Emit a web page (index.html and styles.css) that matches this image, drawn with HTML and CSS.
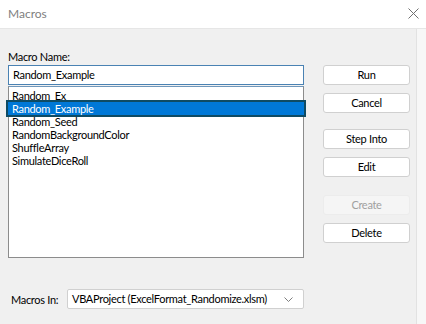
FILE: index.html
```html
<!DOCTYPE html>
<html>
<head>
<meta charset="utf-8">
<link rel="stylesheet" href="styles.css">
</head>
<body>
<div class="window">
  <div class="titlebar">
    <span class="title">Macros</span>
    <svg class="close" width="11" height="11" viewBox="0 0 11 11"><path d="M0.5 0.5 L10.5 10.5 M10.5 0.5 L0.5 10.5" stroke="#707070" stroke-width="1" fill="none"/></svg>
  </div>
  <div class="body">
    <div class="top">
      <div class="left">
        <div class="label">Macro Name:</div>
        <div class="input">Random_Example</div>
        <div class="list">
          <div class="item">Random_Ex</div>
          <div class="item selected">Random_Example</div>
          <div class="item">Random_Seed</div>
          <div class="item">RandomBackgroundColor</div>
          <div class="item">ShuffleArray</div>
          <div class="item">SimulateDiceRoll</div>
        </div>
      </div>
      <div class="buttons">
        <div class="btn">Run</div>
        <div class="btn gap8">Cancel</div>
        <div class="btn gap16">Step Into</div>
        <div class="btn gap8">Edit</div>
        <div class="btn disabled gap18">Create</div>
        <div class="btn gap8">Delete</div>
      </div>
    </div>
    <div class="bottom">
      <span class="in-label">Macros In:</span>
      <div class="select">
        <span class="sel-text">VBAProject (ExcelFormat_Randomize.xlsm)</span>
        <svg class="chev" width="9" height="5" viewBox="0 0 9 5"><path d="M0.5 0.5 L4.5 4.5 L8.5 0.5" stroke="#707070" stroke-width="0.9" fill="none"/></svg>
      </div>
    </div>
  </div>
</div>
</body>
</html>
```
FILE: styles.css
```css
html, body {
  margin: 0;
  padding: 0;
  background: #f7f7f7;
}
.window {
  width: 426px;
  height: 324px;
  display: flex;
  flex-direction: column;
  font-family: Lato, "Noto Sans", sans-serif;
  font-size: 11px;
  letter-spacing: -0.3px;
  color: #000;
  overflow: hidden;
}
.titlebar {
  height: 28px;
  background: #fff;
  border-bottom: 1px solid #e6e6e6;
  display: flex;
  align-items: center;
  justify-content: space-between;
  padding: 0 8px 0 8px;
  flex-shrink: 0;
}
.title {
  color: #808080;
  font-size: 12px;
  letter-spacing: 0;
  margin-top: -1px;
}
.close {
  margin-right: -1px;
  margin-top: -1px;
}
.body {
  flex: 1;
  width: 408px;
  background: #f0f0f0;
  border-right: 1px solid #e2e2e2;
  padding: 19px 0 0 8px;
}
.top {
  display: flex;
}
.left {
  width: 296px;
  display: flex;
  flex-direction: column;
}
.label {
  height: 17px;
  line-height: 17px;
}
.input {
  height: 18px;
  line-height: 18px;
  background: #fff;
  border: 1px solid #4a82b3;
  padding-left: 4px;
}
.list {
  margin-top: 1px;
  height: 168px;
  background: #fff;
  border: 1px solid #8c8c8c;
  border-top-color: #6f97bb;
  padding-top: 2px;
}
.item {
  height: 13px;
  line-height: 13px;
  padding-left: 3px;
  white-space: nowrap;
  overflow: hidden;
}
.item.selected {
  position: relative;
  background: #0078d7;
  color: #fff;
  height: 13px;
  margin: 0 -1px;
  padding-left: 4px;
  box-shadow: 0 0 0 2px #0f4b63;
}
.buttons {
  margin-left: 19px;
  width: 87px;
  padding-top: 17px;
  display: flex;
  flex-direction: column;
}
.btn {
  height: 18px;
  line-height: 18px;
  text-align: center;
  background: #fff;
  border: 1px solid #d0d0d0;
  border-radius: 3px;
}
.btn.disabled {
  background: #f5f5f5;
  border-color: #ececec;
  color: #a0a0a0;
}
.gap8 { margin-top: 8px; }
.gap16 { margin-top: 16px; }
.gap18 { margin-top: 18px; }
.bottom {
  margin-top: 31px;
  display: flex;
  align-items: center;
}
.in-label {
  width: 56px;
  padding-left: 3px;
}
.select {
  width: 237px;
  height: 20px;
  box-sizing: border-box;
  background: #fff;
  border: 1px solid #d0d0d0;
  border-radius: 2px;
  padding: 0 10px 0 4px;
  display: flex;
  align-items: center;
  justify-content: space-between;
}
.sel-text {
  white-space: nowrap;
  line-height: 18px;
}
.chev {
  flex-shrink: 0;
}
```
